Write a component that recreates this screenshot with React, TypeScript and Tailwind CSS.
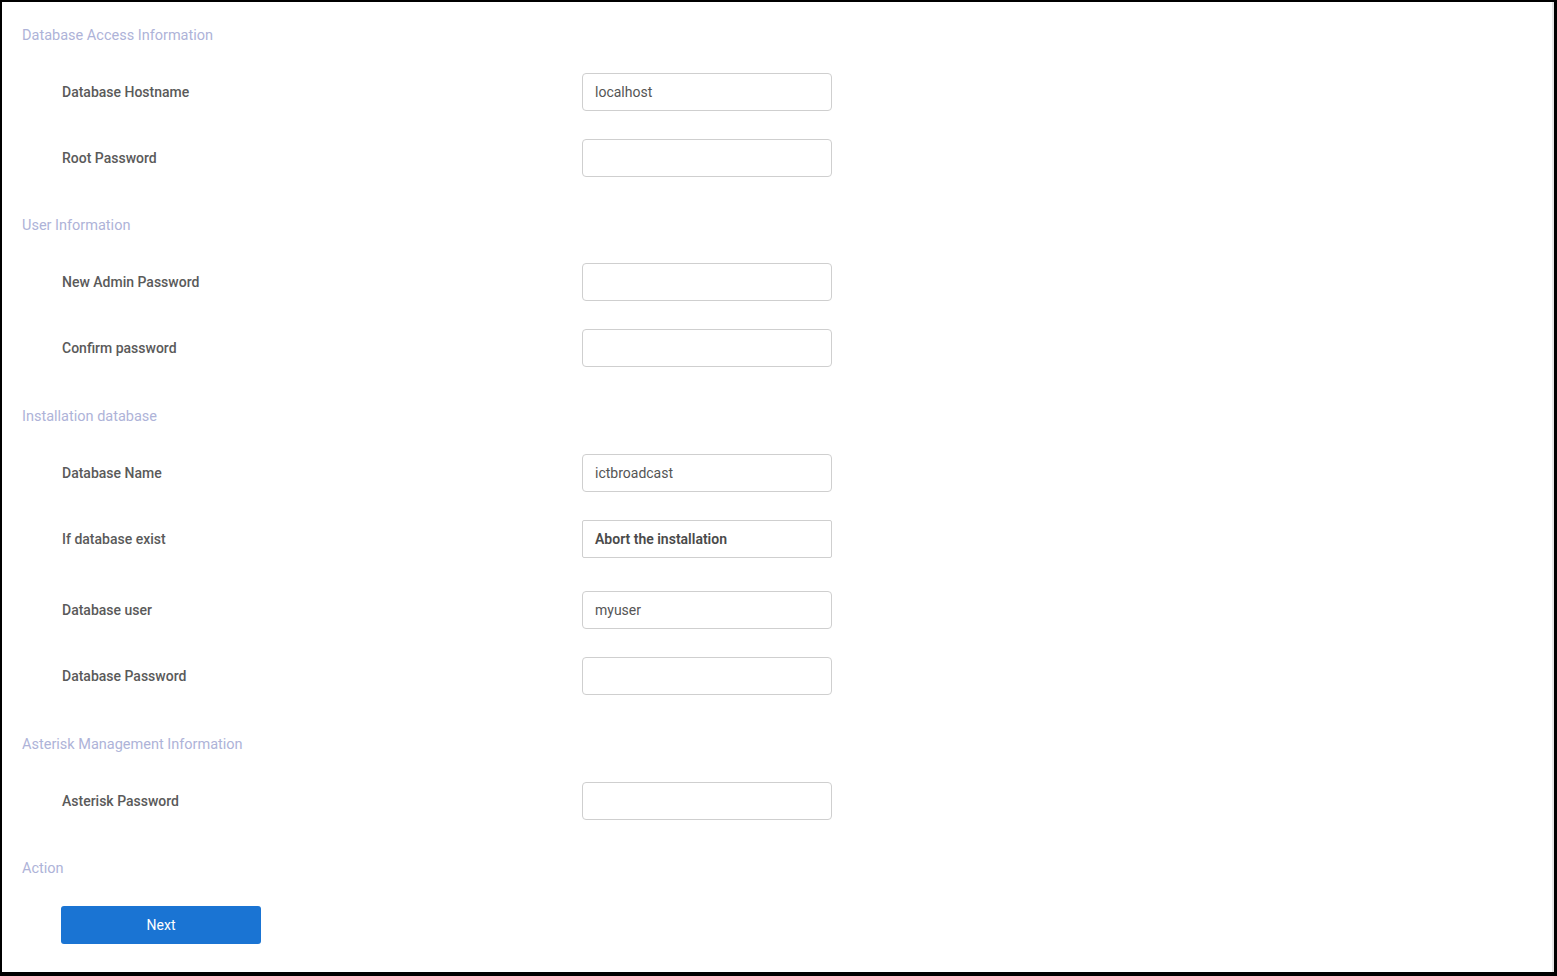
import React from 'react'

type Row =
  | { kind: 'input'; label: string; value?: string }
  | { kind: 'select'; label: string; value: string }

type Section = { title: string; rows: Row[] }

const SECTIONS: Section[] = [
  {
    title: 'Database Access Information',
    rows: [
      { kind: 'input', label: 'Database Hostname', value: 'localhost' },
      { kind: 'input', label: 'Root Password' },
    ],
  },
  {
    title: 'User Information',
    rows: [
      { kind: 'input', label: 'New Admin Password' },
      { kind: 'input', label: 'Confirm password' },
    ],
  },
  {
    title: 'Installation database',
    rows: [
      { kind: 'input', label: 'Database Name', value: 'ictbroadcast' },
      { kind: 'select', label: 'If database exist', value: 'Abort the installation' },
      { kind: 'input', label: 'Database user', value: 'myuser' },
      { kind: 'input', label: 'Database Password' },
    ],
  },
  {
    title: 'Asterisk Management Information',
    rows: [{ kind: 'input', label: 'Asterisk Password' }],
  },
]

function SectionTitle({ children, first }: { children: React.ReactNode; first?: boolean }) {
  return (
    <div
      className={`pl-5 pb-[14px] text-[14.5px] leading-[18px] text-[#aeb3d8] ${first ? 'pt-[25px]' : 'pt-[26px]'}`}
    >
      {children}
    </div>
  )
}

function FormRow({ row }: { row: Row }) {
  const isSelect = row.kind === 'select'
  return (
    <div className={`flex items-center pl-[60px] ${isSelect ? 'pt-[14px] pb-[19px]' : 'py-[14px]'}`}>
      <div className="w-[520px] text-[14px] font-medium text-[#5a5a5a]">{row.label}</div>
      {isSelect ? (
        <div className="flex h-[38px] w-[250px] items-center rounded-[2px] border border-[#cfcfcf] px-[12px] text-[14px] font-semibold text-[#4a4a4a]">
          {row.value}
        </div>
      ) : (
        <input
          readOnly
          type="text"
          defaultValue={row.value ?? ''}
          className="h-[38px] w-[250px] rounded-[4px] border border-[#cfcfcf] px-[12px] text-[14px] text-[#555] outline-none"
        />
      )}
    </div>
  )
}

export default function App() {
  return (
    <div
      className="box-border flex h-[976px] w-full border-t-2 border-l-2 border-r-[3px] border-b-4 border-black bg-white"
      style={{ fontFamily: 'Roboto, "Noto Sans", sans-serif' }}
    >
      <div className="flex-1">
        {SECTIONS.map((s, i) => (
          <div key={s.title} className={i >= 2 ? 'mt-px' : ''}>
            <SectionTitle first={i === 0}>{s.title}</SectionTitle>
            {s.rows.map((r) => (
              <FormRow key={r.label} row={r} />
            ))}
          </div>
        ))}
        <SectionTitle>Action</SectionTitle>
        <div className="pl-[59px] pt-[14px]">
          <button className="h-[38px] w-[200px] rounded-[3px] bg-[#1a74d3] text-[14px] text-white">
            Next
          </button>
        </div>
      </div>
      <div className="w-[2px] bg-[#e6e6e6]" />
    </div>
  )
}
